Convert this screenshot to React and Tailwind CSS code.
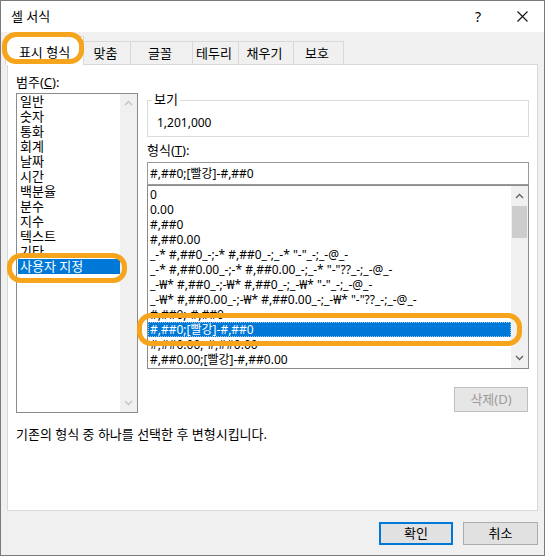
import React from "react";

const font = "font-['Segoe_UI','Noto_Sans','Noto_Sans_CJK_KR',sans-serif]";

const categories = ["일반", "숫자", "통화", "회계", "날짜", "시간", "백분율", "분수", "지수", "텍스트", "기타", "사용자 지정"];

const formats = [
  "0",
  "0.00",
  "#,##0",
  "#,##0.00",
  '_-* #,##0_-;-* #,##0_-;_-* "-"_-;_-@_-',
  '_-* #,##0.00_-;-* #,##0.00_-;_-* "-"??_-;_-@_-',
  '_-₩* #,##0_-;-₩* #,##0_-;_-₩* "-"_-;_-@_-',
  '_-₩* #,##0.00_-;-₩* #,##0.00_-;_-₩* "-"??_-;_-@_-',
  "#,##0;-#,##0",
  "#,##0;[빨강]-#,##0",
  "#,##0.00;-#,##0.00",
  "#,##0.00;[빨강]-#,##0.00",
];

const tabs = [
  { label: "맞춤", w: "w-[48px]" },
  { label: "글꼴", w: "w-[63px]" },
  { label: "테두리", w: "w-[47px]" },
  { label: "채우기", w: "w-[56px]" },
  { label: "보호", w: "w-[51px]" },
];

function Chevron({ up, color }) {
  return (
    <svg width="9" height="6" viewBox="0 0 9 6">
      <polyline
        points={up ? "1,5 4.5,1.5 8,5" : "1,1 4.5,4.5 8,1"}
        fill="none"
        stroke={color}
        strokeWidth="1.3"
      />
    </svg>
  );
}

function Highlight({ className }) {
  return (
    <div className={`absolute border-[5px] border-[#f6a41c] rounded-[14px] pointer-events-none z-20 ${className}`} />
  );
}

export default function App() {
  return (
    <div className={`relative w-[545px] h-[556px] bg-[#f0f0f0] border border-[#7a7a7a] text-[13px] text-black ${font}`}>
      {/* title bar */}
      <div className="h-[31px] bg-white flex items-center pl-[10px]">
        <span className="leading-[15px]">셀 서식</span>
        <span className="ml-auto text-[14px] leading-[15px] mr-[36px]">?</span>
        <svg width="11" height="11" viewBox="0 0 11 11" className="mr-[16px]">
          <path d="M0.5 0.5 L10.5 10.5 M10.5 0.5 L0.5 10.5" stroke="#111" strokeWidth="1.1" />
        </svg>
      </div>

      {/* tabs */}
      <div className="h-[33px] -mb-px flex items-end pl-[4px]">
        <div className="relative z-10 w-[79px] h-[29px] bg-white border border-b-0 border-[#d9d9d9] flex items-center justify-center pt-[3px]">
          표시 형식
        </div>
        {tabs.map((t) => (
          <div
            key={t.label}
            className={`${t.w} -ml-px h-[24px] border border-b-0 border-[#d9d9d9] flex items-center justify-center pt-[1px] pr-[3px]`}
          >
            {t.label}
          </div>
        ))}
      </div>

      {/* panel */}
      <div className="ml-[6px] w-[531px] h-[447px] bg-white border border-[#d9d9d9] px-[8px]">
        <div className="flex gap-[9px]">
          {/* category column */}
          <div className="w-[122px] pt-[10px]">
            <div className="leading-[15px] mb-[3px]">
              범주(<u>C</u>):
            </div>
            <div className="h-[320px] border border-[#8c8c8c] flex">
              <div className="flex-1 pl-[1px]">
                {categories.map((c) => (
                  <div
                    key={c}
                    className={`h-[15px] leading-[15px] pl-[2px] ${c === "사용자 지정" ? "bg-[#0078d7] text-white" : ""}`}
                  >
                    {c}
                  </div>
                ))}
              </div>
              <div className="w-[17px] bg-[#f0f0f0] flex flex-col items-center justify-between py-[6px]">
                <Chevron up color="#c2c2c2" />
                <Chevron color="#c2c2c2" />
              </div>
            </div>
          </div>

          {/* format column */}
          <div className="w-[382px] pt-[35px]">
            <div className="relative h-[37px] border border-[#dcdcdc] pl-[9px] pt-[14px]">
              <span className="absolute -top-[9px] left-[4px] bg-white px-[2px] leading-[15px]">보기</span>
              <div className="leading-[15px] text-[12px]">1,201,000</div>
            </div>
            <div className="mt-[6px] leading-[15px] mb-[4px]">
              형식(<u>T</u>):
            </div>
            <div className="h-[23px] border border-[#999999] flex items-center pl-[2px] text-[12px]">
              #,##0;[빨강]-#,##0
            </div>
            <div className="h-[184px] border border-[#8c8c8c] flex text-[12px]">
              <div className="flex-1 pt-[1px] overflow-hidden">
                {formats.map((f, i) => (
                  <div
                    key={i}
                    className={`h-[15px] leading-[15px] pl-[2px] whitespace-nowrap ${
                      i === 9 ? "bg-[#0078d7] text-white outline outline-1 outline-dotted outline-offset-[-1px] outline-[#9cc6ec]" : ""
                    }`}
                  >
                    {f}
                  </div>
                ))}
              </div>
              <div className="w-[17px] bg-[#f0f0f0] flex flex-col items-center">
                <div className="h-[20px] flex items-center">
                  <Chevron up color="#606060" />
                </div>
                <div className="w-[15px] h-[32px] bg-[#cdcdcd]" />
                <div className="mt-auto h-[20px] flex items-center">
                  <Chevron color="#606060" />
                </div>
              </div>
            </div>
            <div className="flex justify-end mt-[18px] mr-[1px]">
              <div className="w-[74px] h-[25px] bg-[#e6e6e6] border border-[#bfbfbf] text-[#9b9b9b] flex items-center justify-center">
                삭제(D)
              </div>
            </div>
          </div>
        </div>
        <div className="mt-[14px] leading-[15px]">기존의 형식 중 하나를 선택한 후 변형시킵니다.</div>
      </div>

      {/* buttons */}
      <div className="flex justify-end gap-[10px] pr-[6px] mt-[11px]">
        <div className="w-[74px] h-[23px] bg-[#e1e1e1] border-2 border-[#0078d7] flex items-center justify-center">확인</div>
        <div className="w-[75px] h-[23px] bg-[#e1e1e1] border border-[#adadad] flex items-center justify-center">취소</div>
      </div>

      <Highlight className="left-[1px] top-[31px] w-[82px] h-[32px]" />
      <Highlight className="left-[6px] top-[252px] w-[120px] h-[30px]" />
      <Highlight className="left-[136px] top-[312px] w-[385px] h-[33px]" />
    </div>
  );
}
